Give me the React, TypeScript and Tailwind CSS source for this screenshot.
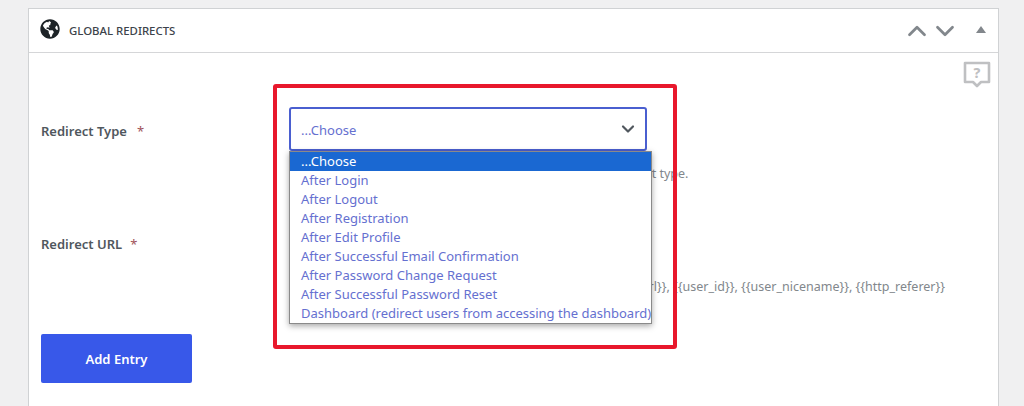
import { FaGlobeAmericas } from 'react-icons/fa'
import { ChevronUp, ChevronDown } from 'lucide-react'

const OPTIONS = [
  'After Login',
  'After Logout',
  'After Registration',
  'After Edit Profile',
  'After Successful Email Confirmation',
  'After Password Change Request',
  'After Successful Password Reset',
  'Dashboard (redirect users from accessing the dashboard)',
]

function FieldLabel({ text, gap }: { text: string; gap: string }) {
  return (
    <div className="flex items-center text-[13px] font-semibold text-[#50575e]">
      <span>{text}</span>
      <span className={`${gap} text-[#a0525a] font-normal`}>*</span>
    </div>
  )
}

export default function App() {
  return (
    <div className="h-screen overflow-hidden bg-[#f0f0f1] pl-[28px] pr-[25px] pt-[8px] font-['Noto_Sans','Open_Sans',sans-serif]">
      <div className="h-[500px] border border-[#d0d2d4] bg-white">
        {/* Header */}
        <div className="flex h-[44px] items-center border-b border-[#d5d6d8] pl-[11px] pr-[12px]">
          <FaGlobeAmericas className="h-[20px] w-[20px] text-[#1d2327] -translate-y-[2px]" />
          <span className="ml-[9px] text-[11.4px] font-medium text-[#3c434a]">GLOBAL REDIRECTS</span>
          <div className="ml-auto flex items-center text-[#82878c]">
            <ChevronUp size={30} strokeWidth={2.2} className="-my-[4px]" />
            <ChevronDown size={30} strokeWidth={2.2} className="-my-[4px] -ml-[2px]" />
            <svg width="10" height="7" viewBox="0 0 10 7" className="ml-[16px] -translate-y-[1px]">
              <path d="M5 0 L10 7 H0 Z" fill="#82878c" />
            </svg>
          </div>
        </div>

        {/* Form */}
        <div className="relative pl-[12px]">
          <svg width="28" height="28" viewBox="0 0 28 28" className="absolute right-[7px] top-[8px]" fill="none">
            <path d="M2 2 H26 V21 H18 L14 25 L10 21 H2 Z" stroke="#bfc0c2" strokeWidth="2.6" strokeLinejoin="round" />
            <text x="14" y="16.5" textAnchor="middle" fontSize="14" fontWeight="800" fill="#bfc0c2">?</text>
          </svg>

          <div className="flex pt-[54px]">
            <div className="w-[248px] pt-[15px]">
              <FieldLabel text="Redirect Type" gap="ml-[10px]" />
            </div>
            <div className="relative">
              <div className="flex h-[44px] w-[358px] items-center justify-between rounded-[3px] border-2 border-[#4a5fd0] bg-white pl-[10px] pr-[7px] pt-[3px] text-[13px] text-[#6570d0]">
                <span>...Choose</span>
                <ChevronDown size={20} strokeWidth={2.6} className="text-[#50575e] -mt-[3px]" />
              </div>
              <div className="mt-[11px] pl-[18px] text-[12.5px] leading-[24px] text-[#82878c] whitespace-nowrap">
                Select where users are sent after each event of that redirect type.
              </div>
            </div>
          </div>

          <div className="flex pt-[49px]">
            <div className="w-[248px]">
              <FieldLabel text="Redirect URL" gap="ml-[8px]" />
            </div>
          </div>
          <div className="pl-[564px] pt-[23px] text-[12.5px] leading-[18px] text-[#82878c] whitespace-nowrap">
            <span>{'{{site_url}}, {{user_id}}, {{user_nicename}}, {{http_referer}}'}</span>
          </div>

          <button className="mt-[38px] flex h-[49px] w-[151px] items-center justify-center rounded-[2px] bg-[#3858e9] pt-[3px] text-[13px] font-semibold text-white">
            Add Entry
          </button>

          {/* Open select list */}
          <div className="absolute left-[260px] top-[98px] w-[363px] border border-[#8a8a8a] bg-white text-[13px] leading-[19px] text-[#6570d0] shadow-[0_2px_6px_rgba(0,0,0,0.35)]">
            <div className="bg-[#1a68d2] pl-[11px] text-white">...Choose</div>
            {OPTIONS.map(o => (
              <div key={o} className="pl-[11px] whitespace-nowrap">{o}</div>
            ))}
          </div>

          {/* Red highlight */}
          <div className="absolute left-[244px] top-[31px] h-[265px] w-[404px] rounded-[3px] border-[4px] border-[#e8182c]" />
        </div>
      </div>
    </div>
  )
}
